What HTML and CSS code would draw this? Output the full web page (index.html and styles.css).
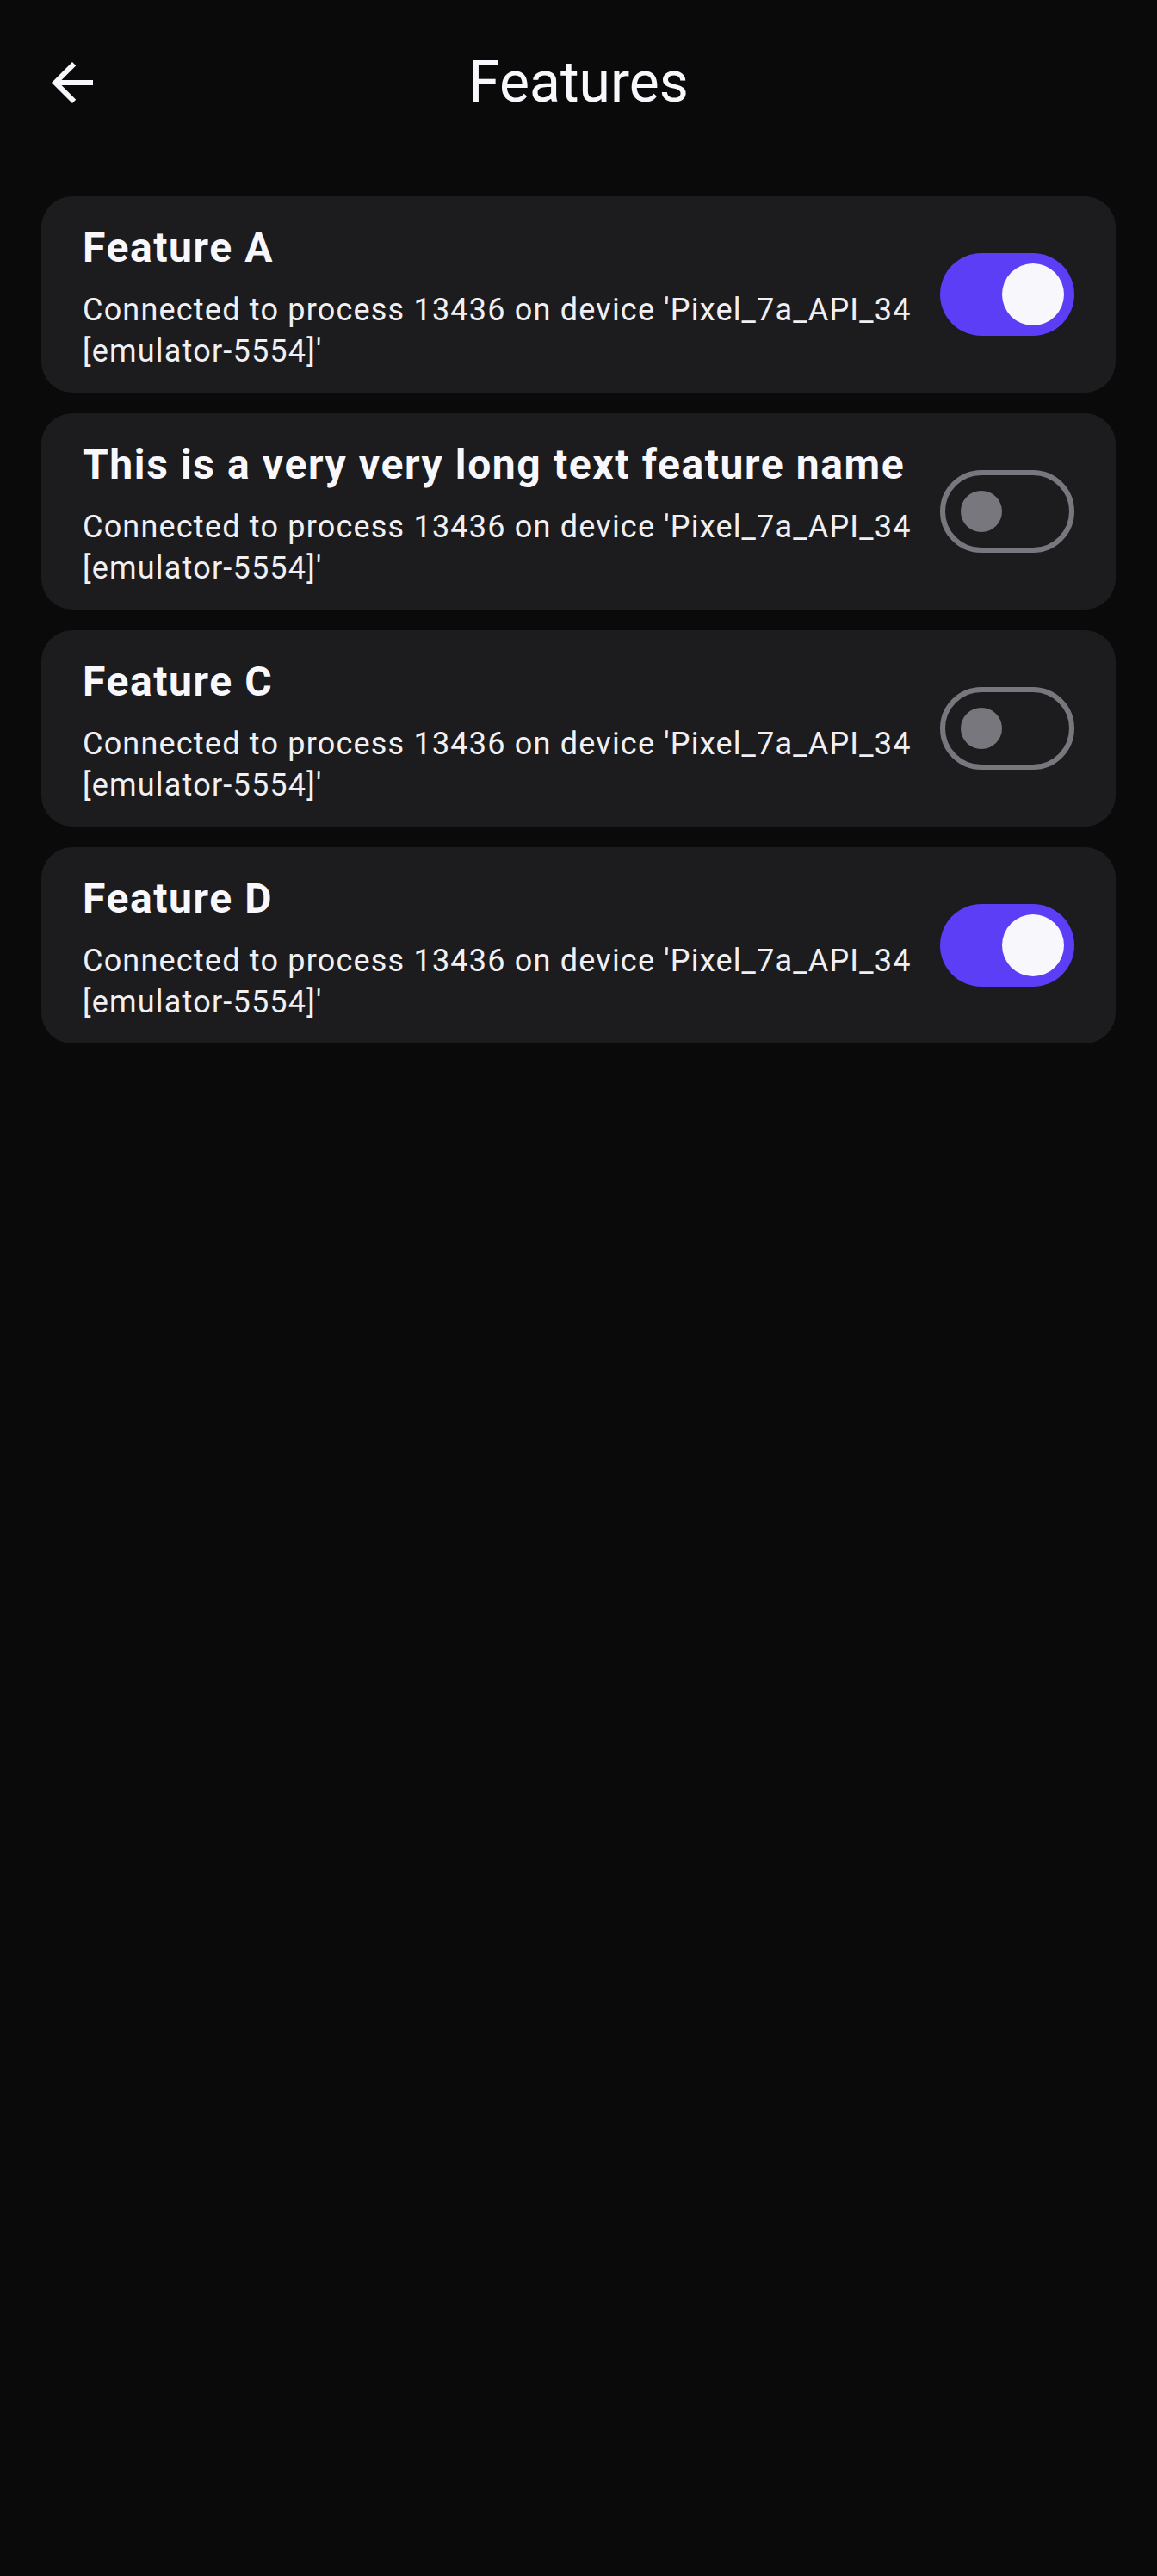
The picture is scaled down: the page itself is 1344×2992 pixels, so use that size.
FILE: index.html
```html
<!DOCTYPE html>
<html lang="en">
<head>
<meta charset="utf-8">
<title>Features</title>
<link rel="stylesheet" href="styles.css">
</head>
<body>
<div class="screen">
  <header class="topbar">
    <button class="back" aria-label="Back">
      <svg viewBox="0 0 24 24" width="72" height="72"><path fill="#f8f8fc" d="M20 11H7.83l5.59-5.59L12 4l-8 8 8 8 1.41-1.41L7.83 13H20v-2z"/></svg>
    </button>
    <h1 class="title">Features</h1>
  </header>
  <main class="list">
    <div class="card">
      <div class="texts">
        <div class="name">Feature A</div>
        <div class="desc">Connected to process 13436 on device 'Pixel_7a_API_34 [emulator-5554]'</div>
      </div>
      <div class="switch on"><span class="thumb"></span></div>
    </div>
    <div class="card">
      <div class="texts">
        <div class="name">This is a very very long text feature name</div>
        <div class="desc">Connected to process 13436 on device 'Pixel_7a_API_34 [emulator-5554]'</div>
      </div>
      <div class="switch"><span class="thumb"></span></div>
    </div>
    <div class="card">
      <div class="texts">
        <div class="name">Feature C</div>
        <div class="desc">Connected to process 13436 on device 'Pixel_7a_API_34 [emulator-5554]'</div>
      </div>
      <div class="switch"><span class="thumb"></span></div>
    </div>
    <div class="card">
      <div class="texts">
        <div class="name">Feature D</div>
        <div class="desc">Connected to process 13436 on device 'Pixel_7a_API_34 [emulator-5554]'</div>
      </div>
      <div class="switch on"><span class="thumb"></span></div>
    </div>
  </main>
</div>
</body>
</html>
```

FILE: styles.css
```css
html, body {
  margin: 0;
  padding: 0;
  background: #0a0a0b;
}
body {
  font-family: Roboto, "Noto Sans", sans-serif;
  color: #f8f8fc;
}
.screen {
  width: 1344px;
  min-height: 2992px;
  background: #0a0a0b;
}
.topbar {
  height: 192px;
  display: flex;
  align-items: center;
  position: relative;
  justify-content: center;
}
.back {
  position: absolute;
  left: 48px;
  top: 60px;
  width: 72px;
  height: 72px;
  padding: 0;
  border: 0;
  background: transparent;
  display: flex;
}
.title {
  margin: 0;
  font-size: 66px;
  font-weight: 400;
  line-height: 84px;
  color: #f8f8fc;
}
.list {
  padding: 36px 48px 0;
  display: flex;
  flex-direction: column;
  gap: 24px;
}
.card {
  background: #1c1c1e;
  border-radius: 36px;
  padding: 24px 48px;
  display: flex;
  align-items: center;
  gap: 24px;
}
.texts {
  flex: 1;
  display: flex;
  flex-direction: column;
  gap: 12px;
}
.name {
  font-size: 48px;
  line-height: 72px;
  font-weight: 700;
  letter-spacing: 1.6px;
  color: #f8f8fc;
}
.desc {
  font-size: 36px;
  line-height: 48px;
  letter-spacing: 1.2px;
  color: #f0f0f4;
}
.switch {
  flex: none;
  box-sizing: border-box;
  width: 156px;
  height: 96px;
  border-radius: 48px;
  border: 6px solid #78777d;
  background: #1c1c1e;
  display: flex;
  align-items: center;
  padding-left: 18px;
}
.switch .thumb {
  width: 48px;
  height: 48px;
  border-radius: 50%;
  background: #78777d;
}
.switch.on {
  border: 0;
  background: #5b3ef5;
  padding-left: 72px;
}
.switch.on .thumb {
  width: 72px;
  height: 72px;
  background: #f8f8fc;
}
```
